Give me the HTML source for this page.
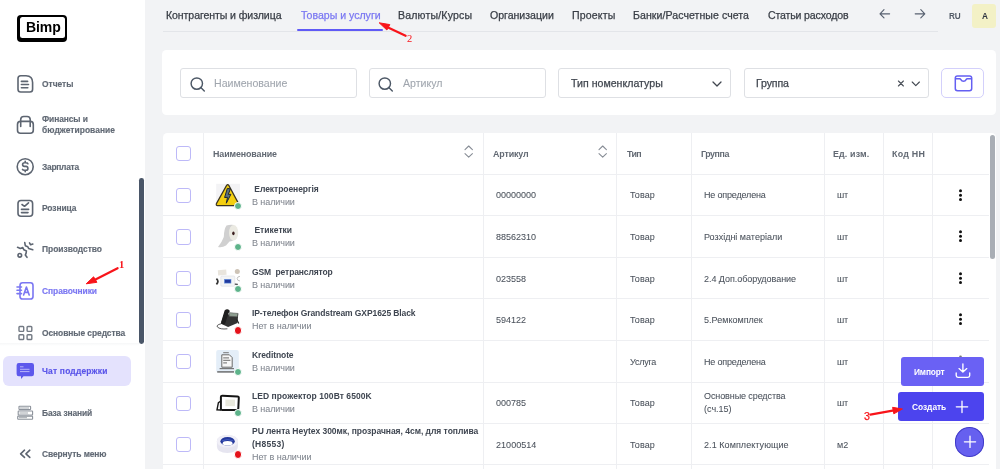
<!DOCTYPE html>
<html><head><meta charset="utf-8"><style>
html,body{margin:0;padding:0;width:1000px;height:469px;overflow:hidden;background:#f2f3f5;}
body{position:relative;font-family:"Liberation Sans",sans-serif;}
.t{position:absolute;line-height:1;white-space:nowrap;will-change:transform;}
.r{position:absolute;}
</style></head><body>
<div class="r" style="left:0px;top:0px;width:145.00px;height:469.00px;background:#fff"></div>
<div class="r" style="left:17.3px;top:15.3px;width:49.90px;height:26.90px;background:#000;border-radius:4px"></div>
<div class="r" style="left:20px;top:17.3px;width:45.20px;height:20.30px;background:#fff;border-radius:2.5px"></div>
<div class="t" style="left:25.60px;top:19.55px;font-size:14px;color:#000;font-weight:700;letter-spacing:-0.100px;">Bimp</div>
<div class="t" id="f0" style="left:41.60px;top:79.85px;font-size:8.45px;color:#626a75;font-weight:700;letter-spacing:-0.020px;-webkit-text-stroke:0.15px #626a75;">Отчеты</div>
<div class="t" id="f1" style="left:41.60px;top:115.25px;font-size:8.45px;color:#626a75;font-weight:700;letter-spacing:-0.106px;-webkit-text-stroke:0.15px #626a75;">Финансы и</div>
<div class="t" id="f2" style="left:41.60px;top:126.15px;font-size:8.45px;color:#626a75;font-weight:700;letter-spacing:0.041px;-webkit-text-stroke:0.15px #626a75;">бюджетирование</div>
<div class="t" id="f3" style="left:41.60px;top:162.85px;font-size:8.45px;color:#626a75;font-weight:700;letter-spacing:-0.286px;-webkit-text-stroke:0.15px #626a75;">Зарплата</div>
<div class="t" id="f4" style="left:41.60px;top:204.15px;font-size:8.45px;color:#626a75;font-weight:700;letter-spacing:-0.083px;-webkit-text-stroke:0.15px #626a75;">Розница</div>
<div class="t" id="f5" style="left:41.60px;top:245.45px;font-size:8.45px;color:#626a75;font-weight:700;letter-spacing:-0.013px;-webkit-text-stroke:0.15px #626a75;">Производство</div>
<div class="t" id="f6" style="left:41.60px;top:286.85px;font-size:8.45px;color:#7b77f2;font-weight:700;letter-spacing:-0.060px;-webkit-text-stroke:0.15px #7b77f2;">Справочники</div>
<div class="t" id="f7" style="left:41.60px;top:328.65px;font-size:8.45px;color:#626a75;font-weight:700;letter-spacing:-0.077px;-webkit-text-stroke:0.15px #626a75;">Основные средства</div>
<div class="r" style="left:3.2px;top:356.3px;width:128.30px;height:29.40px;background:#e4e2fd;border-radius:6px"></div>
<div class="t" id="f8" style="left:41.60px;top:367.05px;font-size:8.45px;color:#5a55e9;font-weight:700;letter-spacing:0.188px;-webkit-text-stroke:0.15px #5a55e9;">Чат поддержки</div>
<div class="t" id="f9" style="left:41.60px;top:408.65px;font-size:8.45px;color:#626a75;font-weight:700;letter-spacing:-0.120px;-webkit-text-stroke:0.15px #626a75;">База знаний</div>
<div class="t" id="f10" style="left:41.60px;top:450.15px;font-size:8.45px;color:#626a75;font-weight:700;letter-spacing:-0.105px;-webkit-text-stroke:0.15px #626a75;">Свернуть меню</div>
<div class="r" style="left:139.1px;top:177.8px;width:4.70px;height:166.20px;background:#4a5668;border-radius:2.4px"></div>
<div class="r" style="left:0px;top:343px;width:139.00px;height:3.00px;background:linear-gradient(#f6f7f8,#fff)"></div>
<svg class="r" style="left:16px;top:74px;" width="19" height="20" viewBox="0 0 19 20"><path d="M2 4.5 Q2 1.8 4.7 1.8 H10 Q16.6 1.8 16.6 8.6 V15.3 Q16.6 18 13.9 18 H4.7 Q2 18 2 15.3 Z" fill="none" stroke="#5d6571" stroke-width="1.6" stroke-linecap="round" stroke-linejoin="round"/><path d="M5.4 7.4H11.6M5.4 10.5H12.5M5.4 13.7H11.8" fill="none" stroke="#5d6571" stroke-width="1.6" stroke-linecap="round" stroke-linejoin="round"/></svg>
<svg class="r" style="left:16px;top:114px;" width="19" height="22" viewBox="0 0 19 22"><rect x="1.5" y="7.4" width="15.8" height="11.8" rx="3" fill="none" stroke="#5d6571" stroke-width="1.6" stroke-linecap="round" stroke-linejoin="round"/><path d="M4.7 12.4V5.6 Q4.7 2.5 7.8 2.5 H11.1 Q14.2 2.5 14.2 5.6 V12.4" fill="none" stroke="#5d6571" stroke-width="1.6" stroke-linecap="round" stroke-linejoin="round"/></svg>
<svg class="r" style="left:15px;top:156px;" width="20" height="20" viewBox="0 0 20 20"><circle cx="10.2" cy="10.7" r="8" fill="none" stroke="#5d6571" stroke-width="1.6" stroke-linecap="round" stroke-linejoin="round"/><path d="M12.9 7.7 Q12.5 6.8 11 6.8 H9.5 Q7.6 6.8 7.6 8.5 Q7.6 10.3 9.5 10.4 H11 Q12.9 10.5 12.9 12.4 Q12.9 14.2 11 14.2 H9.4 Q7.9 14.2 7.5 13.4 M10.2 5.2 V6.8 M10.2 14.2 V15.8" fill="none" stroke="#5d6571" stroke-width="1.6" stroke-linecap="round" stroke-linejoin="round"/></svg>
<svg class="r" style="left:16px;top:198.5px;" width="19" height="20" viewBox="0 0 19 20"><rect x="2" y="1.5" width="14.6" height="15.7" rx="3" fill="none" stroke="#5d6571" stroke-width="1.6" stroke-linecap="round" stroke-linejoin="round" stroke-width="1.7"/><path d="M6 5.5 L8.5 7.3 L12.5 3.8 M5.5 10.4H12.6M5.5 13.6H12" fill="none" stroke="#5d6571" stroke-width="1.6" stroke-linecap="round" stroke-linejoin="round" stroke-width="1.7"/></svg>
<svg class="r" style="left:16px;top:240.5px;" width="19" height="18" viewBox="0 0 19 18"><circle cx="3.8" cy="14.3" r="1.8" fill="none" stroke="#5d6571" stroke-width="1.6" stroke-linecap="round" stroke-linejoin="round" stroke-width="1.9"/><path d="M1.6 6.3 L4.3 7.4 L6.8 6.6 L7.9 8.8 L10.4 9.9 L10.1 12.1 L9.3 14.1 L11 16.3" fill="none" stroke="#5d6571" stroke-width="1.6" stroke-linecap="round" stroke-linejoin="round" stroke-width="1.9"/><path d="M8.75 1.6 L9.3 4.65 L11.8 5.75 L12.6 7.4 L16.8 8.8" fill="none" stroke="#5d6571" stroke-width="1.6" stroke-linecap="round" stroke-linejoin="round" stroke-width="1.9"/><path d="M13.5 1.9 L14.6 3.8 L16.8 3" fill="none" stroke="#5d6571" stroke-width="1.6" stroke-linecap="round" stroke-linejoin="round" stroke-width="1.9"/></svg>
<svg class="r" style="left:15px;top:281px;" width="20" height="20" viewBox="0 0 20 20"><rect x="5" y="1.8" width="13" height="16.2" rx="2.6" fill="none" stroke="#7b77f2" stroke-width="1.6" stroke-linecap="round" stroke-linejoin="round"/><path d="M2 6H6.5M2 9.3H6.5M2 12.6H6.5" fill="none" stroke="#7b77f2" stroke-width="1.6" stroke-linecap="round" stroke-linejoin="round"/><path d="M8.6 14 L11.4 6 L14.2 14 M9.6 11.4H13.2" fill="none" stroke="#7b77f2" stroke-width="1.6" stroke-linecap="round" stroke-linejoin="round"/></svg>
<svg class="r" style="left:16.5px;top:324.5px;" width="18" height="17" viewBox="0 0 18 17"><g fill="none" stroke="#737a84" stroke-width="1.4"><rect x="2" y="1.5" width="4.7" height="4.9" rx=".8"/><rect x="10.1" y="1.5" width="4.7" height="4.9" rx=".8"/><rect x="2" y="9.8" width="4.7" height="4.7" rx=".8"/><rect x="10.1" y="9.8" width="4.7" height="4.7" rx=".8"/></g></svg>
<svg class="r" style="left:15.5px;top:362px;" width="19" height="18" viewBox="0 0 19 18"><path d="M2.8 1 H15.8 Q18 1 18 3.2 V12 Q18 14.2 15.8 14.2 H7.5 L5 17 V14.2 H2.8 Q0.6 14.2 0.6 12 V3.2 Q0.6 1 2.8 1Z" fill="#5d58ec"/><path d="M4 4.8H7.5M4 7.3H13.5M4 9.6H13.5" stroke="#b9b6f9" stroke-width="1" fill="none"/></svg>
<svg class="r" style="left:16px;top:405px;" width="19" height="16" viewBox="0 0 19 16"><g fill="none" stroke="#8c929b" stroke-width="1.1"><rect x="3" y="1.2" width="11.6" height="3.4" rx=".6"/><rect x="2.2" y="6" width="14.4" height="4" rx=".6"/><rect x="1.7" y="11.1" width="14.9" height="3.2" rx=".6"/><path d="M4 3H13M3.5 8H12M3 12.7H11" stroke-width=".8"/></g><rect x="12.8" y="7.2" width="2" height="2" fill="#fff"/></svg>
<svg class="r" style="left:19px;top:449px;" width="13" height="10" viewBox="0 0 13 10"><path d="M5.5 1.2 L1.6 4.8 L5.5 8.4 M10.8 1.2 L6.9 4.8 L10.8 8.4" fill="none" stroke="#5d6571" stroke-width="1.6" stroke-linecap="round" stroke-linejoin="round" stroke-width="1.3"/></svg>
<div class="t" id="f11" style="left:165.60px;top:10.07px;font-size:10.55px;color:#383d45;font-weight:400;letter-spacing:-0.080px;-webkit-text-stroke:0.25px #383d45;">Контрагенты и физлица</div>
<div class="t" id="f12" style="left:300.60px;top:10.07px;font-size:10.55px;color:#7a77f2;font-weight:400;letter-spacing:0.000px;-webkit-text-stroke:0.25px #7a77f2;">Товары и услуги</div>
<div class="t" id="f13" style="left:398.20px;top:10.07px;font-size:10.55px;color:#383d45;font-weight:400;letter-spacing:0.182px;-webkit-text-stroke:0.25px #383d45;">Валюты/Курсы</div>
<div class="t" id="f14" style="left:490.20px;top:10.07px;font-size:10.55px;color:#383d45;font-weight:400;letter-spacing:0.000px;-webkit-text-stroke:0.25px #383d45;">Организации</div>
<div class="t" id="f15" style="left:572.00px;top:10.07px;font-size:10.55px;color:#383d45;font-weight:400;letter-spacing:0.167px;-webkit-text-stroke:0.25px #383d45;">Проекты</div>
<div class="t" id="f16" style="left:633.20px;top:10.07px;font-size:10.55px;color:#383d45;font-weight:400;letter-spacing:0.070px;-webkit-text-stroke:0.25px #383d45;">Банки/Расчетные счета</div>
<div class="t" id="f17" style="left:767.60px;top:10.07px;font-size:10.55px;color:#383d45;font-weight:400;letter-spacing:-0.142px;-webkit-text-stroke:0.25px #383d45;">Статьи расходов</div>
<div class="r" style="left:163px;top:30.6px;width:775.00px;height:1.00px;background:#e3e5e9"></div>
<div class="r" style="left:297.2px;top:29.4px;width:86.00px;height:1.80px;background:#605af6;border-radius:2px"></div>
<svg class="r" style="left:878px;top:8px;" width="14" height="12" viewBox="0 0 14 12"><path d="M11.6 5.8H2 M6 1.7 L2 5.8 L6 9.9" fill="none" stroke="#586170" stroke-width="1.15" stroke-linecap="round" stroke-linejoin="round"/></svg>
<svg class="r" style="left:913px;top:8px;" width="14" height="12" viewBox="0 0 14 12"><path d="M2.2 5.8H11.8 M7.8 1.7 L11.8 5.8 L7.8 9.9" fill="none" stroke="#586170" stroke-width="1.15" stroke-linecap="round" stroke-linejoin="round"/></svg>
<div class="t" style="left:948.50px;top:13.16px;font-size:8.2px;color:#535b67;font-weight:700;letter-spacing:-0.200px;">RU</div>
<div class="r" style="left:972.4px;top:4.4px;width:23.60px;height:23.20px;background:#f3f1c6;border-radius:3px"></div>
<div class="t" style="left:981.90px;top:13.16px;font-size:8.2px;color:#2f3540;font-weight:700;letter-spacing:0.000px;">A</div>
<div class="r" style="left:162.4px;top:50px;width:833.80px;height:65.30px;background:#fff;border-radius:4.5px"></div>
<div class="r" style="left:180px;top:68.2px;width:177.20px;height:29.40px;background:#fff;border:1px solid #dee0e4;border-radius:3px;box-sizing:border-box"></div>
<div class="r" style="left:369.3px;top:68.2px;width:176.50px;height:29.40px;background:#fff;border:1px solid #dee0e4;border-radius:3px;box-sizing:border-box"></div>
<div class="r" style="left:558.4px;top:68.2px;width:173.10px;height:29.40px;background:#fff;border:1px solid #dee0e4;border-radius:3px;box-sizing:border-box"></div>
<div class="r" style="left:744.3px;top:68.2px;width:184.90px;height:29.40px;background:#fff;border:1px solid #dee0e4;border-radius:3px;box-sizing:border-box"></div>
<svg class="r" style="left:189.5px;top:76.8px;" width="16" height="16" viewBox="0 0 16 16"><circle cx="6.8" cy="6.6" r="5.7" fill="none" stroke="#4d5866" stroke-width="1.45"/><path d="M10.8 10.6 L14.3 14.1" stroke="#4d5866" stroke-width="1.45" stroke-linecap="round"/></svg>
<svg class="r" style="left:378.3px;top:76.8px;" width="16" height="16" viewBox="0 0 16 16"><circle cx="6.8" cy="6.6" r="5.7" fill="none" stroke="#4d5866" stroke-width="1.45"/><path d="M10.8 10.6 L14.3 14.1" stroke="#4d5866" stroke-width="1.45" stroke-linecap="round"/></svg>
<div class="t" id="f18" style="left:214.20px;top:78.13px;font-size:10.6px;color:#a0a6ae;font-weight:400;letter-spacing:-0.008px;-webkit-text-stroke:0.08px #a0a6ae;">Наименование</div>
<div class="t" id="f19" style="left:402.70px;top:78.13px;font-size:10.6px;color:#a0a6ae;font-weight:400;letter-spacing:-0.020px;-webkit-text-stroke:0.08px #a0a6ae;">Артикул</div>
<div class="t" id="f20" style="left:570.60px;top:78.13px;font-size:10.6px;color:#40464f;font-weight:400;letter-spacing:0.011px;-webkit-text-stroke:0.25px #40464f;">Тип номенклатуры</div>
<div class="t" id="f21" style="left:755.90px;top:78.13px;font-size:10.6px;color:#40464f;font-weight:400;letter-spacing:-0.140px;-webkit-text-stroke:0.25px #40464f;">Группа</div>
<svg class="r" style="left:711.6px;top:80.6px;" width="10" height="6.5" viewBox="0 0 10 6.5"><path d="M1 1 L5 5 L9 1" fill="none" stroke="#40464f" stroke-width="1.25" stroke-linecap="round" stroke-linejoin="round"/></svg>
<svg class="r" style="left:910.6px;top:80.8px;" width="10" height="6" viewBox="0 0 10 6"><path d="M1.2 1 L4.8 4.6 L8.4 1" fill="none" stroke="#40464f" stroke-width="1.1" stroke-linecap="round" stroke-linejoin="round"/></svg>
<svg class="r" style="left:896.6px;top:79.8px;" width="8" height="7" viewBox="0 0 8 7"><path d="M1.4 1 L6.4 6 M6.4 1 L1.4 6" stroke="#4a5059" stroke-width="1.1" stroke-linecap="round"/></svg>
<div class="r" style="left:941.4px;top:68.2px;width:43.00px;height:29.40px;background:#fff;border:1px solid #d3d0fb;border-radius:5px;box-sizing:border-box"></div>
<svg class="r" style="left:952.5px;top:73.5px;" width="21" height="19" viewBox="0 0 21 19"><g fill="none" stroke="#645ff2" stroke-width="1.5" stroke-linejoin="round"><rect x="2.3" y="1.9" width="16.4" height="14.9" rx="2.2"/><path d="M2.3 4.8 H6.6 Q7.5 4.8 7.9 5.6 Q8.7 7.3 10.5 7.3 Q12.3 7.3 13.1 5.6 Q13.5 4.8 14.4 4.8 H18.7"/></g></svg>
<div class="r" style="left:162.5px;top:132.8px;width:833.70px;height:347.20px;background:#fff;border-radius:4.5px"></div>
<div class="r" style="left:202.5px;top:133px;width:1.00px;height:347.00px;background:#eeeff2"></div>
<div class="r" style="left:482.6px;top:133px;width:1.00px;height:347.00px;background:#eeeff2"></div>
<div class="r" style="left:615.9px;top:133px;width:1.00px;height:347.00px;background:#eeeff2"></div>
<div class="r" style="left:690.7px;top:133px;width:1.00px;height:347.00px;background:#eeeff2"></div>
<div class="r" style="left:823.9px;top:133px;width:1.00px;height:347.00px;background:#eeeff2"></div>
<div class="r" style="left:882.7px;top:133px;width:1.00px;height:347.00px;background:#eeeff2"></div>
<div class="r" style="left:932.2px;top:133px;width:1.00px;height:347.00px;background:#eeeff2"></div>
<div class="r" style="left:162.5px;top:173.6px;width:826.10px;height:1.00px;background:#eeeff2"></div>
<div class="r" style="left:162.5px;top:215.1px;width:826.10px;height:1.00px;background:#eeeff2"></div>
<div class="r" style="left:162.5px;top:256.7px;width:826.10px;height:1.00px;background:#eeeff2"></div>
<div class="r" style="left:162.5px;top:298.2px;width:826.10px;height:1.00px;background:#eeeff2"></div>
<div class="r" style="left:162.5px;top:339.9px;width:826.10px;height:1.00px;background:#eeeff2"></div>
<div class="r" style="left:162.5px;top:381.5px;width:826.10px;height:1.00px;background:#eeeff2"></div>
<div class="r" style="left:162.5px;top:422.9px;width:826.10px;height:1.00px;background:#eeeff2"></div>
<div class="r" style="left:162.5px;top:464.1px;width:826.10px;height:1.00px;background:#eeeff2"></div>
<div class="r" style="left:989.8px;top:135px;width:5.40px;height:123.50px;background:#a9aeb5;border-radius:3px"></div>
<div class="t" id="f22" style="left:213.20px;top:149.97px;font-size:8.9px;color:#626973;font-weight:700;letter-spacing:-0.107px;">Наименование</div>
<div class="t" id="f23" style="left:492.80px;top:149.97px;font-size:8.9px;color:#626973;font-weight:700;letter-spacing:-0.135px;">Артикул</div>
<div class="t" id="f24" style="left:626.60px;top:149.97px;font-size:8.9px;color:#626973;font-weight:700;letter-spacing:-0.650px;">Тип</div>
<div class="t" id="f25" style="left:700.60px;top:149.97px;font-size:8.9px;color:#626973;font-weight:700;letter-spacing:-0.440px;">Группа</div>
<div class="t" id="f26" style="left:833.40px;top:149.97px;font-size:8.9px;color:#626973;font-weight:700;letter-spacing:0.154px;">Ед. изм.</div>
<div class="t" id="f27" style="left:892.40px;top:149.97px;font-size:8.9px;color:#626973;font-weight:700;letter-spacing:0.240px;">Код НН</div>
<svg class="r" style="left:464.4px;top:145.4px;" width="10" height="13.5" viewBox="0 0 10 13.5"><path d="M1 4.6 L4.7 1 L8.4 4.6 M1 8.6 L4.7 12.2 L8.4 8.6" fill="none" stroke="#858b94" stroke-width="1.05" stroke-linecap="round" stroke-linejoin="round"/></svg>
<svg class="r" style="left:597.9px;top:145.4px;" width="10" height="13.5" viewBox="0 0 10 13.5"><path d="M1 4.6 L4.7 1 L8.4 4.6 M1 8.6 L4.7 12.2 L8.4 8.6" fill="none" stroke="#858b94" stroke-width="1.05" stroke-linecap="round" stroke-linejoin="round"/></svg>
<div class="r" style="left:176.1px;top:146.3px;width:14.80px;height:15.20px;border:1.2px solid #bdb9f8;border-radius:3px;box-sizing:border-box;background:#fff"></div>
<div class="r" style="left:176.1px;top:187.85px;width:14.80px;height:15.20px;border:1.2px solid #bdb9f8;border-radius:3px;box-sizing:border-box;background:#fff"></div>
<div class="t" id="f28" style="left:251.60px;top:184.55px;font-size:8.5px;color:#3f4651;font-weight:700;letter-spacing:-0.053px;">&nbsp;Електроенергія</div>
<div class="t" id="f29" style="left:251.80px;top:197.53px;font-size:9px;color:#80868f;font-weight:400;letter-spacing:-0.075px;-webkit-text-stroke:0.06px #80868f;">В наличии</div>
<div class="t" id="f30" style="left:496.20px;top:191.43px;font-size:9px;color:#4a515b;font-weight:400;letter-spacing:0.000px;-webkit-text-stroke:0.06px #4a515b;">00000000</div>
<div class="t" id="f31" style="left:629.80px;top:191.43px;font-size:9px;color:#4a515b;font-weight:400;letter-spacing:0.075px;-webkit-text-stroke:0.06px #4a515b;">Товар</div>
<div class="t" id="f32" style="left:703.60px;top:191.43px;font-size:9px;color:#4a515b;font-weight:400;letter-spacing:-0.174px;-webkit-text-stroke:0.06px #4a515b;">Не определена</div>
<div class="t" id="f33" style="left:836.60px;top:191.43px;font-size:9px;color:#4a515b;font-weight:400;letter-spacing:-0.300px;-webkit-text-stroke:0.06px #4a515b;">шт</div>
<svg class="r" style="left:958px;top:188.65px;" width="5" height="13" viewBox="0 0 5 13"><circle cx="2.5" cy="1.8" r="1.5" fill="#111"/><circle cx="2.5" cy="6.2" r="1.5" fill="#111"/><circle cx="2.5" cy="10.6" r="1.5" fill="#111"/></svg>
<div class="r" style="left:176.1px;top:229.35px;width:14.80px;height:15.20px;border:1.2px solid #bdb9f8;border-radius:3px;box-sizing:border-box;background:#fff"></div>
<div class="t" id="f34" style="left:251.60px;top:226.05px;font-size:8.5px;color:#3f4651;font-weight:700;letter-spacing:0.018px;">&nbsp;Етикетки</div>
<div class="t" id="f35" style="left:251.80px;top:239.03px;font-size:9px;color:#80868f;font-weight:400;letter-spacing:-0.075px;-webkit-text-stroke:0.06px #80868f;">В наличии</div>
<div class="t" id="f36" style="left:496.20px;top:232.93px;font-size:9px;color:#4a515b;font-weight:400;letter-spacing:0.011px;-webkit-text-stroke:0.06px #4a515b;">88562310</div>
<div class="t" id="f37" style="left:629.80px;top:232.93px;font-size:9px;color:#4a515b;font-weight:400;letter-spacing:0.075px;-webkit-text-stroke:0.06px #4a515b;">Товар</div>
<div class="t" id="f38" style="left:703.60px;top:232.93px;font-size:9px;color:#4a515b;font-weight:400;letter-spacing:0.000px;-webkit-text-stroke:0.06px #4a515b;">Розхідні матеріали</div>
<div class="t" id="f39" style="left:836.60px;top:232.93px;font-size:9px;color:#4a515b;font-weight:400;letter-spacing:-0.300px;-webkit-text-stroke:0.06px #4a515b;">шт</div>
<svg class="r" style="left:958px;top:230.15px;" width="5" height="13" viewBox="0 0 5 13"><circle cx="2.5" cy="1.8" r="1.5" fill="#111"/><circle cx="2.5" cy="6.2" r="1.5" fill="#111"/><circle cx="2.5" cy="10.6" r="1.5" fill="#111"/></svg>
<div class="r" style="left:176.1px;top:270.95px;width:14.80px;height:15.20px;border:1.2px solid #bdb9f8;border-radius:3px;box-sizing:border-box;background:#fff"></div>
<div class="t" id="f40" style="left:251.60px;top:267.65px;font-size:8.5px;color:#3f4651;font-weight:700;letter-spacing:-0.116px;">GSM&nbsp; ретранслятор</div>
<div class="t" id="f41" style="left:251.80px;top:280.63px;font-size:9px;color:#80868f;font-weight:400;letter-spacing:-0.075px;-webkit-text-stroke:0.06px #80868f;">В наличии</div>
<div class="t" id="f42" style="left:496.20px;top:274.53px;font-size:9px;color:#4a515b;font-weight:400;letter-spacing:0.000px;-webkit-text-stroke:0.06px #4a515b;">023558</div>
<div class="t" id="f43" style="left:629.80px;top:274.53px;font-size:9px;color:#4a515b;font-weight:400;letter-spacing:0.075px;-webkit-text-stroke:0.06px #4a515b;">Товар</div>
<div class="t" id="f44" style="left:703.60px;top:274.53px;font-size:9px;color:#4a515b;font-weight:400;letter-spacing:-0.038px;-webkit-text-stroke:0.06px #4a515b;">2.4 Доп.оборудование</div>
<div class="t" id="f45" style="left:836.60px;top:274.53px;font-size:9px;color:#4a515b;font-weight:400;letter-spacing:-0.300px;-webkit-text-stroke:0.06px #4a515b;">шт</div>
<svg class="r" style="left:958px;top:271.75px;" width="5" height="13" viewBox="0 0 5 13"><circle cx="2.5" cy="1.8" r="1.5" fill="#111"/><circle cx="2.5" cy="6.2" r="1.5" fill="#111"/><circle cx="2.5" cy="10.6" r="1.5" fill="#111"/></svg>
<div class="r" style="left:176.1px;top:312.45px;width:14.80px;height:15.20px;border:1.2px solid #bdb9f8;border-radius:3px;box-sizing:border-box;background:#fff"></div>
<div class="t" id="f46" style="left:251.60px;top:309.15px;font-size:8.5px;color:#3f4651;font-weight:700;letter-spacing:-0.096px;">IP-телефон Grandstream GXP1625 Black</div>
<div class="t" id="f47" style="left:251.80px;top:322.13px;font-size:9px;color:#80868f;font-weight:400;letter-spacing:-0.057px;-webkit-text-stroke:0.06px #80868f;">Нет в наличии</div>
<div class="t" id="f48" style="left:496.20px;top:316.03px;font-size:9px;color:#4a515b;font-weight:400;letter-spacing:0.000px;-webkit-text-stroke:0.06px #4a515b;">594122</div>
<div class="t" id="f49" style="left:629.80px;top:316.03px;font-size:9px;color:#4a515b;font-weight:400;letter-spacing:0.075px;-webkit-text-stroke:0.06px #4a515b;">Товар</div>
<div class="t" id="f50" style="left:703.60px;top:316.03px;font-size:9px;color:#4a515b;font-weight:400;letter-spacing:0.016px;-webkit-text-stroke:0.06px #4a515b;">5.Ремкомплек</div>
<div class="t" id="f51" style="left:836.60px;top:316.03px;font-size:9px;color:#4a515b;font-weight:400;letter-spacing:-0.300px;-webkit-text-stroke:0.06px #4a515b;">шт</div>
<svg class="r" style="left:958px;top:313.25px;" width="5" height="13" viewBox="0 0 5 13"><circle cx="2.5" cy="1.8" r="1.5" fill="#111"/><circle cx="2.5" cy="6.2" r="1.5" fill="#111"/><circle cx="2.5" cy="10.6" r="1.5" fill="#111"/></svg>
<div class="r" style="left:176.1px;top:354.15px;width:14.80px;height:15.20px;border:1.2px solid #bdb9f8;border-radius:3px;box-sizing:border-box;background:#fff"></div>
<div class="t" id="f52" style="left:251.60px;top:350.85px;font-size:8.5px;color:#3f4651;font-weight:700;letter-spacing:-0.101px;">Kreditnote</div>
<div class="t" id="f53" style="left:251.80px;top:363.83px;font-size:9px;color:#80868f;font-weight:400;letter-spacing:-0.075px;-webkit-text-stroke:0.06px #80868f;">В наличии</div>
<div class="t" id="f54" style="left:629.80px;top:357.73px;font-size:9px;color:#4a515b;font-weight:400;letter-spacing:-0.240px;-webkit-text-stroke:0.06px #4a515b;">Услуга</div>
<div class="t" id="f55" style="left:703.60px;top:357.73px;font-size:9px;color:#4a515b;font-weight:400;letter-spacing:-0.174px;-webkit-text-stroke:0.06px #4a515b;">Не определена</div>
<div class="t" id="f56" style="left:836.60px;top:357.73px;font-size:9px;color:#4a515b;font-weight:400;letter-spacing:-0.300px;-webkit-text-stroke:0.06px #4a515b;">шт</div>
<svg class="r" style="left:958px;top:354.95px;" width="5" height="13" viewBox="0 0 5 13"><circle cx="2.5" cy="1.8" r="1.3" fill="#777"/></svg>
<div class="r" style="left:176.1px;top:395.75px;width:14.80px;height:15.20px;border:1.2px solid #bdb9f8;border-radius:3px;box-sizing:border-box;background:#fff"></div>
<div class="t" id="f57" style="left:251.60px;top:392.45px;font-size:8.5px;color:#3f4651;font-weight:700;letter-spacing:0.058px;">LED прожектор 100Вт 6500K</div>
<div class="t" id="f58" style="left:251.80px;top:405.43px;font-size:9px;color:#80868f;font-weight:400;letter-spacing:-0.075px;-webkit-text-stroke:0.06px #80868f;">В наличии</div>
<div class="t" id="f59" style="left:496.20px;top:399.33px;font-size:9px;color:#4a515b;font-weight:400;letter-spacing:0.000px;-webkit-text-stroke:0.06px #4a515b;">000785</div>
<div class="t" id="f60" style="left:629.80px;top:399.33px;font-size:9px;color:#4a515b;font-weight:400;letter-spacing:0.075px;-webkit-text-stroke:0.06px #4a515b;">Товар</div>
<div class="t" id="f61" style="left:703.60px;top:391.93px;font-size:9px;color:#4a515b;font-weight:400;letter-spacing:-0.098px;-webkit-text-stroke:0.06px #4a515b;">Основные средства</div>
<div class="t" style="left:703.60px;top:405.13px;font-size:9px;color:#4a515b;font-weight:400;letter-spacing:0.000px;-webkit-text-stroke:0.06px #4a515b;">(сч.15)</div>
<div class="t" id="f62" style="left:836.60px;top:399.33px;font-size:9px;color:#4a515b;font-weight:400;letter-spacing:-0.300px;-webkit-text-stroke:0.06px #4a515b;">шт</div>
<div class="r" style="left:176.1px;top:437.15px;width:14.80px;height:15.20px;border:1.2px solid #bdb9f8;border-radius:3px;box-sizing:border-box;background:#fff"></div>
<div class="t" id="f63" style="left:251.60px;top:427.00px;font-size:8.5px;color:#3f4651;font-weight:700;letter-spacing:-0.024px;">PU лента Heytex 300мк, прозрачная, 4см, для топлива</div>
<div class="t" id="f64" style="left:251.60px;top:439.80px;font-size:8.5px;color:#3f4651;font-weight:700;letter-spacing:0.251px;">(H8553)</div>
<div class="t" id="f65" style="left:251.80px;top:452.98px;font-size:9px;color:#80868f;font-weight:400;letter-spacing:-0.057px;-webkit-text-stroke:0.06px #80868f;">Нет в наличии</div>
<div class="t" id="f66" style="left:496.20px;top:440.73px;font-size:9px;color:#4a515b;font-weight:400;letter-spacing:0.044px;-webkit-text-stroke:0.06px #4a515b;">21000514</div>
<div class="t" id="f67" style="left:629.80px;top:440.73px;font-size:9px;color:#4a515b;font-weight:400;letter-spacing:0.075px;-webkit-text-stroke:0.06px #4a515b;">Товар</div>
<div class="t" id="f68" style="left:703.60px;top:440.73px;font-size:9px;color:#4a515b;font-weight:400;letter-spacing:0.062px;-webkit-text-stroke:0.06px #4a515b;">2.1 Комплектующие</div>
<div class="t" id="f69" style="left:836.60px;top:440.73px;font-size:9px;color:#4a515b;font-weight:400;letter-spacing:0.000px;-webkit-text-stroke:0.06px #4a515b;">м2</div>
<svg class="r" style="left:214px;top:182px" width="26" height="26" viewBox="0 0 26 26"><rect x="2.2" y="1.8" width="23.8" height="22.5" fill="#f3f3f5"/><path d="M12.6 3.4 Q13.7 2 14.8 3.4 L24.6 21.6 Q25.2 23.6 23.4 23.6 H3.6 Q1.8 23.6 2.4 21.6 Z" fill="#f4cf10" stroke="#3b3420" stroke-width="1.2" stroke-linejoin="round"/><path d="M13.3 6.4 L16.4 6.9 L14.3 12.4 L16.9 12.3 L12.3 21.2 L13.5 15.4 L10.6 15.5 Z" fill="#5d7282" stroke="#1d2731" stroke-width="1" stroke-linejoin="round"/></svg>
<svg class="r" style="left:214px;top:223px" width="26" height="26" viewBox="0 0 26 26"><path d="M12.5 2.5 Q16 1.5 20 2 L22.5 14 Q19 18.5 15.5 18.5 L12 22.5 Q8 25 4 24 Q8 19 9.8 14 Q10 6 12.5 2.5 Z" fill="#d0d0d0"/><ellipse cx="19.6" cy="9.8" rx="4.6" ry="7.8" fill="#ebeae2"/><ellipse cx="19.4" cy="10.3" rx="1.2" ry="1.9" fill="#3a1d1d"/></svg>
<svg class="r" style="left:214px;top:264px" width="26" height="26" viewBox="0 0 26 26"><path d="M3.8 6.2 L12.2 5.4 L12.6 10.8 L4.2 11.6 Z" fill="#e9e5dd"/><circle cx="23.3" cy="7.6" r="2.5" fill="#cdc3b6"/><rect x="6.8" y="12" width="14" height="10.2" rx="1" fill="#f3f4f5" stroke="#dcdee0" stroke-width=".6"/><rect x="10.4" y="15.3" width="6.6" height="3.8" fill="#1f3a9e" stroke="#6a95e0" stroke-width=".6"/><path d="M2.4 14.6 Q5.4 17.4 2.4 20.4" stroke="#333" stroke-width="1.8" fill="none"/><path d="M26 12.3 Q23.2 12.5 23.2 14.6 Q23.2 16.8 26 17" stroke="#c2c2c2" stroke-width="1" fill="none"/><path d="M20.8 20.2 L23.8 20.4" stroke="#444" stroke-width="1.3"/></svg>
<svg class="r" style="left:214px;top:305px" width="26" height="26" viewBox="0 0 26 26"><path d="M9.8 9.7 L24.3 8.6 L23.5 18 L14.1 22 L6.9 18.7 Z" fill="#333"/><path d="M15.2 7.6 L23.9 8.4 L23.3 11.8 L15.2 11.2 Z" fill="#8e9e90" stroke="#555" stroke-width=".5"/><path d="M10.6 5.6 Q13 3.2 15.6 5.4 Q16.2 6.6 14.6 8 L11.2 18.4 Q9.3 20.2 7.2 18.2 Q6.8 17.2 7.6 15.5 Z" fill="#1e1e1e"/><path d="M22.8 14.5 L24.8 18.5" stroke="#222" stroke-width="1.2"/><path d="M7 18.8 Q2 20 3.4 22 Q6 24.6 13.4 23.8" stroke="#4a4a4a" stroke-width=".9" fill="none"/></svg>
<svg class="r" style="left:214px;top:347px" width="26" height="28" viewBox="0 0 26 28"><rect x="2.2" y="3" width="22.6" height="22.6" rx="2" fill="#e4eef8"/><rect x="3.2" y="24.2" width="17" height="1.4" fill="#666"/><rect x="9.2" y="5.2" width="5.6" height="1" fill="#777"/><path d="M7.8 7.8 H15.4 L18.2 10.6 V20.2 H7.8 Z" fill="#f7f7f7" stroke="#6a6a6a" stroke-width="1"/><path d="M9.2 10.8 H15 M9.2 13.4 H16.4 M9.2 15.9 H13" stroke="#888" stroke-width="1.2"/><path d="M5.6 21.6 H20" stroke="#777" stroke-width="1.2"/></svg>
<svg class="r" style="left:214px;top:388px" width="26" height="26" viewBox="0 0 26 26"><path d="M8.6 7.7 L23.4 8.4 Q24.9 8.5 24.8 10 L24.3 20.4 Q24.2 22 22.7 22 L8.4 22.1 Q6.9 22.1 6.9 20.6 V9.2 Q6.9 7.6 8.6 7.7 Z" fill="#fff" stroke="#151515" stroke-width="2"/><rect x="11.4" y="11.6" width="9.6" height="6.6" fill="#e8e8dc"/><path d="M7 13 L4.4 14.6 L3 21.8 L7 22" stroke="#151515" stroke-width="1.4" fill="none"/></svg>
<svg class="r" style="left:214px;top:430px" width="26" height="26" viewBox="0 0 26 26"><path d="M2.9 11.5 Q2.9 5 13.4 5 Q23.9 5 23.9 11.5 V16.5 Q23.9 23 13.4 23 Q2.9 23 2.9 16.5 Z" fill="#e6e5f0"/><ellipse cx="13.4" cy="11.3" rx="10.5" ry="6.3" fill="#f0eff7"/><ellipse cx="13.6" cy="11.2" rx="7.2" ry="4.3" fill="#25399c"/><path d="M8 10.8 Q13.6 8.2 19.2 10.8" stroke="#4a66c8" stroke-width=".8" fill="none"/><ellipse cx="13.6" cy="13.2" rx="4.9" ry="2.2" fill="#fff"/></svg>
<div class="r" style="left:234.10px;top:202.00px;width:6.2px;height:6.2px;background:#5db38a;border:1px solid #fff;border-radius:50%"></div>
<div class="r" style="left:234.10px;top:243.30px;width:6.2px;height:6.2px;background:#5db38a;border:1px solid #fff;border-radius:50%"></div>
<div class="r" style="left:234.10px;top:284.90px;width:6.2px;height:6.2px;background:#5db38a;border:1px solid #fff;border-radius:50%"></div>
<div class="r" style="left:234.20px;top:326.40px;width:6.2px;height:6.2px;background:#e5121a;border:1px solid #fff;border-radius:50%"></div>
<div class="r" style="left:234.10px;top:367.90px;width:6.2px;height:6.2px;background:#5db38a;border:1px solid #fff;border-radius:50%"></div>
<div class="r" style="left:234.10px;top:409.30px;width:6.2px;height:6.2px;background:#5db38a;border:1px solid #fff;border-radius:50%"></div>
<div class="r" style="left:234.20px;top:450.40px;width:6.2px;height:6.2px;background:#e5121a;border:1px solid #fff;border-radius:50%"></div>
<div class="r" style="left:901px;top:356.5px;width:83.20px;height:29.20px;background:#6a61f4;border-radius:3px"></div>
<div class="t" id="f70" style="left:914.00px;top:367.69px;font-size:8.4px;color:#fff;font-weight:700;letter-spacing:-0.160px;">Импорт</div>
<svg class="r" style="left:953.5px;top:362px;" width="18" height="17" viewBox="0 0 18 17"><path d="M8.9 1.8 V9.8 M5 6.6 L8.9 10 L12.8 6.6 M2.2 11 V13.6 Q2.2 15.4 4 15.4 H13.9 Q15.7 15.4 15.7 13.6 V11" fill="none" stroke="#fff" stroke-width="1.35" stroke-linecap="round" stroke-linejoin="round"/></svg>
<div class="r" style="left:898px;top:392.2px;width:86.20px;height:29.10px;background:#4c44ee;border-radius:3px"></div>
<div class="t" id="f71" style="left:911.60px;top:402.89px;font-size:8.4px;color:#fff;font-weight:700;letter-spacing:-0.031px;">Создать</div>
<svg class="r" style="left:955.2px;top:400px;" width="14" height="14" viewBox="0 0 14 14"><path d="M7 1.1 V12.5 M1.3 6.8 H12.7" stroke="#fff" stroke-width="1.3" stroke-linecap="round"/></svg>
<div class="r" style="left:954.6px;top:427.4px;width:29.80px;height:29.40px;background:#6660ef;border:1px solid #3f39c9;border-radius:50%;box-sizing:border-box"></div>
<svg class="r" style="left:962.8px;top:435.2px;" width="14" height="14" viewBox="0 0 14 14"><path d="M7 1.2 V12.4 M1.4 6.8 H12.6" stroke="#fff" stroke-width="1.3" stroke-linecap="round"/></svg>
<svg class="r" style="left:0px;top:0px;pointer-events:none" width="1000" height="469" viewBox="0 0 1000 469">
<path d="M95 279.8 L117.6 268.2" stroke="#f8141a" stroke-width="2.2" stroke-linecap="round"/><path d="M86.2 283.8 L93.6 276.8 L96.9 282.3Z" fill="#f8141a" stroke="#f8141a" stroke-width="1" stroke-linejoin="round"/>
<path d="M387 27 L405.6 35.8" stroke="#f8141a" stroke-width="2.2" stroke-linecap="round"/><path d="M379.2 22.8 L389.8 24.6 L386.9 30Z" fill="#f8141a" stroke="#f8141a" stroke-width="1" stroke-linejoin="round"/>
<path d="M870.4 414.6 L894 410.4" stroke="#f8141a" stroke-width="2.2" stroke-linecap="round"/><path d="M902.4 409 L892.6 407.3 L893.8 413.8Z" fill="#f8141a" stroke="#f8141a" stroke-width="1" stroke-linejoin="round"/>
</svg>
<div class="t" style="left:119.40px;top:260.41px;font-size:10.5px;color:#f8141a;font-weight:700;letter-spacing:0.000px;font-family:'Liberation Serif',serif">1</div>
<div class="t" style="left:406.80px;top:34.11px;font-size:10.5px;color:#f8141a;font-weight:400;letter-spacing:0.000px;font-family:'Liberation Serif',serif">2</div>
<div class="t" style="left:864.00px;top:411.13px;font-size:10.6px;color:#f8141a;font-weight:400;letter-spacing:0.000px;-webkit-text-stroke:0.25px #f8141a;x:0">3</div>
</body></html>
